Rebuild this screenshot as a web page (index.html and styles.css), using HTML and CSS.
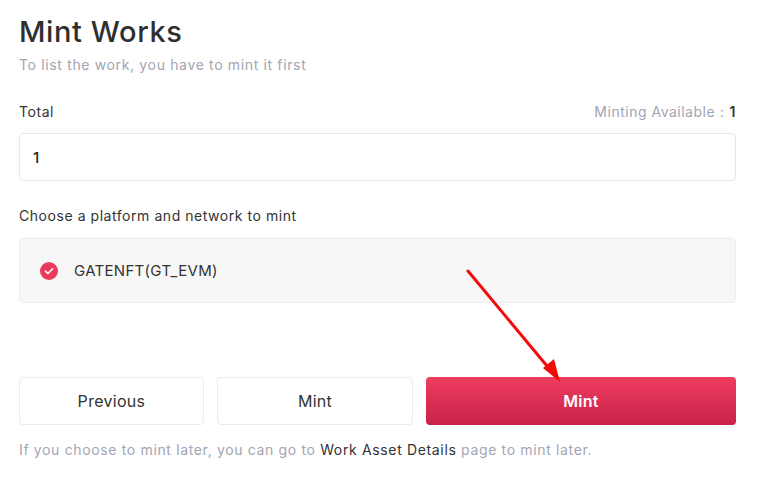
FILE: index.html
```html
<!DOCTYPE html>
<html>
<head>
<meta charset="utf-8">
<link rel="stylesheet" href="styles.css">
</head>
<body>
<div class="page">
  <h1 class="title">Mint Works</h1>
  <p class="subtitle">To list the work, you have to mint it first</p>

  <div class="field-head">
    <span class="label">Total</span>
    <span class="avail">Minting Available：<b>1</b></span>
  </div>
  <div class="input">1</div>

  <div class="label platform-label">Choose a platform and network to mint</div>
  <div class="platform">
    <span class="check">
      <svg width="18" height="18" viewBox="0 0 18 18"><circle cx="9" cy="9" r="9" fill="#ea3a5c"/><path d="M5.4 9.2 L7.9 11.5 L12.6 6.8" fill="none" stroke="#fff" stroke-width="1.6" stroke-linecap="round" stroke-linejoin="round"/></svg>
    </span>
    <span class="platform-name">GATENFT(GT_EVM)</span>
  </div>

  <div class="actions">
    <button class="btn btn-prev">Previous</button>
    <button class="btn btn-mint">Mint</button>
    <button class="btn btn-primary">Mint</button>
  </div>
  <p class="note">If you choose to mint later, you can go to <span class="strong">Work Asset Details</span> page to mint later.</p>
</div>
<svg class="arrow" width="759" height="498" viewBox="0 0 759 498">
  <line x1="468" y1="271" x2="552" y2="372" stroke="#f50a0a" stroke-width="3" stroke-linecap="round"/>
  <polygon points="560,382 543,368 554,359" fill="#f50a0a"/>
</svg>
</body>
</html>
```

FILE: styles.css
```css
html, body {
  margin: 0;
  padding: 0;
  background: #fff;
}
body {
  font-family: "Inter", "Liberation Sans", sans-serif;
  color: #333;
  position: relative;
  width: 759px;
  height: 498px;
  overflow: hidden;
}
.page {
  padding: 14px 23px 0 19px;
}
.title {
  margin: 0;
  font-size: 29px;
  font-weight: 500;
  line-height: 36px;
  color: #2f2f2f;
  letter-spacing: 0.6px;
}
.subtitle {
  margin: 6px 0 0;
  font-size: 14px;
  line-height: 18px;
  color: #a2a5b3;
  letter-spacing: 0.65px;
}
.field-head {
  margin-top: 29px;
  display: flex;
  justify-content: space-between;
  align-items: center;
  height: 18px;
}
.label {
  font-size: 14px;
  line-height: 18px;
  color: #333;
  letter-spacing: 0.55px;
}
.avail {
  font-size: 14px;
  color: #a2a5b3;
  letter-spacing: 0.5px;
}
.avail b {
  color: #333;
  font-weight: 600;
}
.input {
  margin-top: 12px;
  height: 46px;
  border: 1px solid #e8e8e8;
  border-radius: 4px;
  padding: 0 13px;
  display: flex;
  align-items: center;
  font-size: 15px;
  font-weight: 500;
  color: #222;
}
.platform-label {
  margin-top: 26px;
}
.platform {
  margin-top: 13px;
  height: 63px;
  background: #f7f7f7;
  border: 1px solid #ececec;
  border-radius: 4px;
  display: flex;
  align-items: center;
  padding-left: 20px;
}
.check {
  width: 18px;
  height: 18px;
  display: flex;
  margin-right: 16px;
}
.platform-name {
  font-size: 15px;
  color: #333;
  letter-spacing: 0.3px;
}
.actions {
  margin-top: 74px;
  display: flex;
  gap: 13px;
}
.btn {
  height: 48px;
  border-radius: 4px;
  font-family: inherit;
  font-size: 16px;
  font-weight: 400;
  letter-spacing: 0.3px;
  cursor: pointer;
}
.btn-prev {
  width: 185px;
  background: #fff;
  border: 1px solid #ebebeb;
  color: #333;
}
.btn-mint {
  width: 196px;
  background: #fff;
  border: 1px solid #ebebeb;
  color: #333;
}
.btn-primary {
  flex: 1;
  border: none;
  color: #fff;
  font-weight: 600;
  background: linear-gradient(#ee3c60, #c8234a);
}
.note {
  margin: 16px 0 0;
  font-size: 14px;
  line-height: 18px;
  color: #a2a5b3;
  letter-spacing: 0.65px;
}
.strong {
  color: #333;
}
.arrow {
  position: absolute;
  left: 0;
  top: 0;
  pointer-events: none;
}
```
